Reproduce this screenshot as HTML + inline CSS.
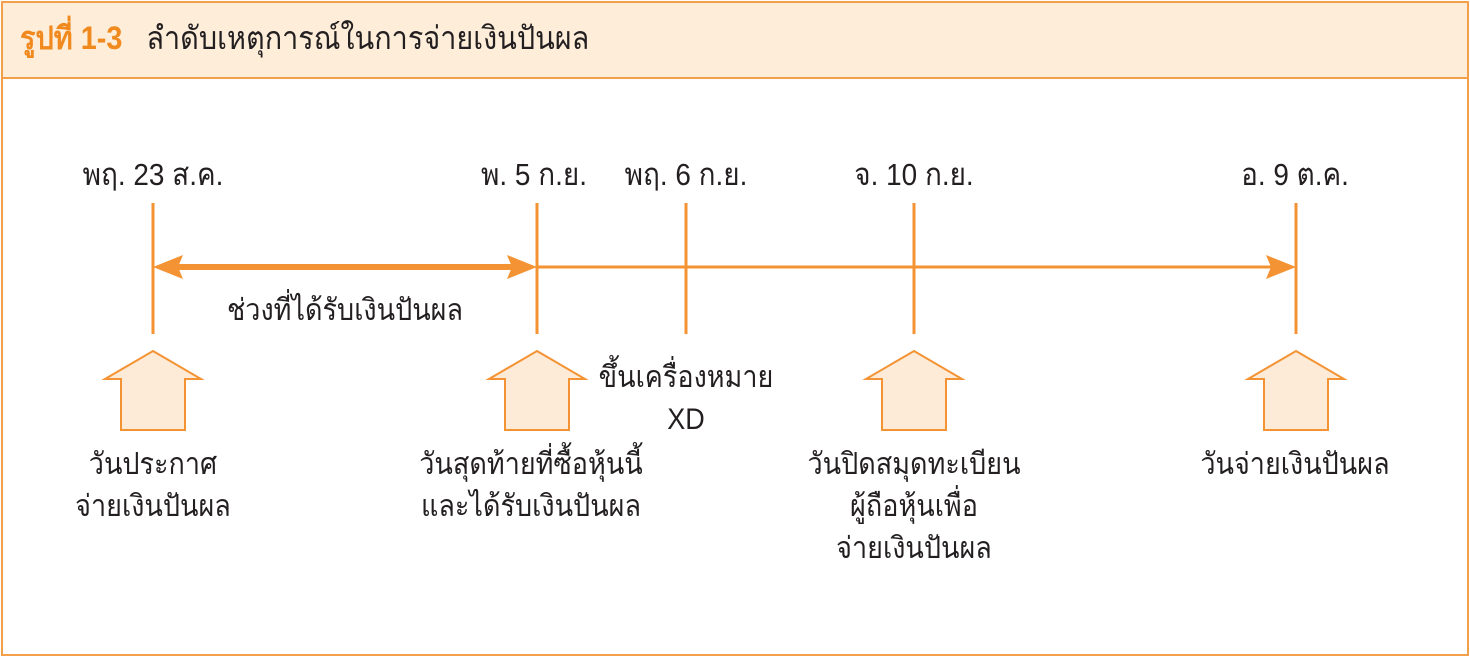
<!DOCTYPE html>
<html><head><meta charset="utf-8"><style>
body{margin:0;width:1470px;height:656px;background:#fff;position:relative;overflow:hidden;font-family:"Liberation Sans","DejaVu Sans",sans-serif;color:#231f20}
.frame{position:absolute;left:1px;top:1px;width:1464px;height:651px;border:2px solid #f4a04a}
.hdr{position:absolute;left:3px;top:3px;width:1464px;height:74px;background:#fdedd9;border-bottom:2px solid #f4a04a}
.t{position:absolute;white-space:nowrap;transform:translateX(-50%) scaleX(0.9);text-align:center;font-size:30px;line-height:42px}
.d{font-size:31px}
</style></head><body>
<div class="hdr"></div>
<div class="frame"></div>
<div style="position:absolute;left:20px;top:19px;font-size:32px;line-height:38px;white-space:nowrap;transform:scaleX(0.9);transform-origin:left"><b style="color:#f0891e">รูปที่ 1-3</b>&nbsp;&nbsp; ลำดับเหตุการณ์ในการจ่ายเงินปันผล</div>
<svg width="1470" height="656" style="position:absolute;left:0;top:0">
<g stroke="#f39333" stroke-width="3">
<line x1="153" y1="203" x2="153" y2="334"/><line x1="537" y1="203" x2="537" y2="334"/><line x1="686" y1="203" x2="686" y2="334"/><line x1="914" y1="203" x2="914" y2="334"/><line x1="1296" y1="203" x2="1296" y2="334"/>
<line x1="537" y1="267" x2="1275" y2="267"/>
<line x1="170" y1="267" x2="520" y2="267" stroke-width="6"/>
</g>
<g fill="#f39333"><path d="M153 267 L183 255 L178 267 L183 279Z"/><path d="M537 267 L507 255 L512 267 L507 279Z"/><path d="M1296 267 L1266 255 L1271 267 L1266 279Z"/></g>
<g fill="#fdebd8" stroke="#f39333" stroke-width="2">
<path d="M153 351 L201 379 L185 379 L185 430 L121 430 L121 379 L105 379Z"/>
<path d="M537 351 L585 379 L569 379 L569 430 L505 430 L505 379 L489 379Z"/>
<path d="M914 351 L962 379 L946 379 L946 430 L882 430 L882 379 L866 379Z"/>
<path d="M1296 351 L1344 379 L1328 379 L1328 430 L1264 430 L1264 379 L1248 379Z"/>
</g></svg>
<div class="t d" style="left:153px;top:154px">พฤ. 23 ส.ค.</div>
<div class="t d" style="left:534px;top:154px">พ. 5 ก.ย.</div>
<div class="t d" style="left:686px;top:154px">พฤ. 6 ก.ย.</div>
<div class="t d" style="left:914px;top:154px">จ. 10 ก.ย.</div>
<div class="t d" style="left:1295px;top:154px">อ. 9 ต.ค.</div>
<div class="t" style="left:345px;top:290px">ช่วงที่ได้รับเงินปันผล</div>
<div class="t" style="left:153px;top:444px">วันประกาศ<br>จ่ายเงินปันผล</div>
<div class="t" style="left:531px;top:444px">วันสุดท้ายที่ซื้อหุ้นนี้<br>และได้รับเงินปันผล</div>
<div class="t" style="left:686px;top:357px">ขึ้นเครื่องหมาย<br>XD</div>
<div class="t" style="left:914px;top:444px">วันปิดสมุดทะเบียน<br>ผู้ถือหุ้นเพื่อ<br>จ่ายเงินปันผล</div>
<div class="t" style="left:1295px;top:444px">วันจ่ายเงินปันผล</div>
</body></html>
